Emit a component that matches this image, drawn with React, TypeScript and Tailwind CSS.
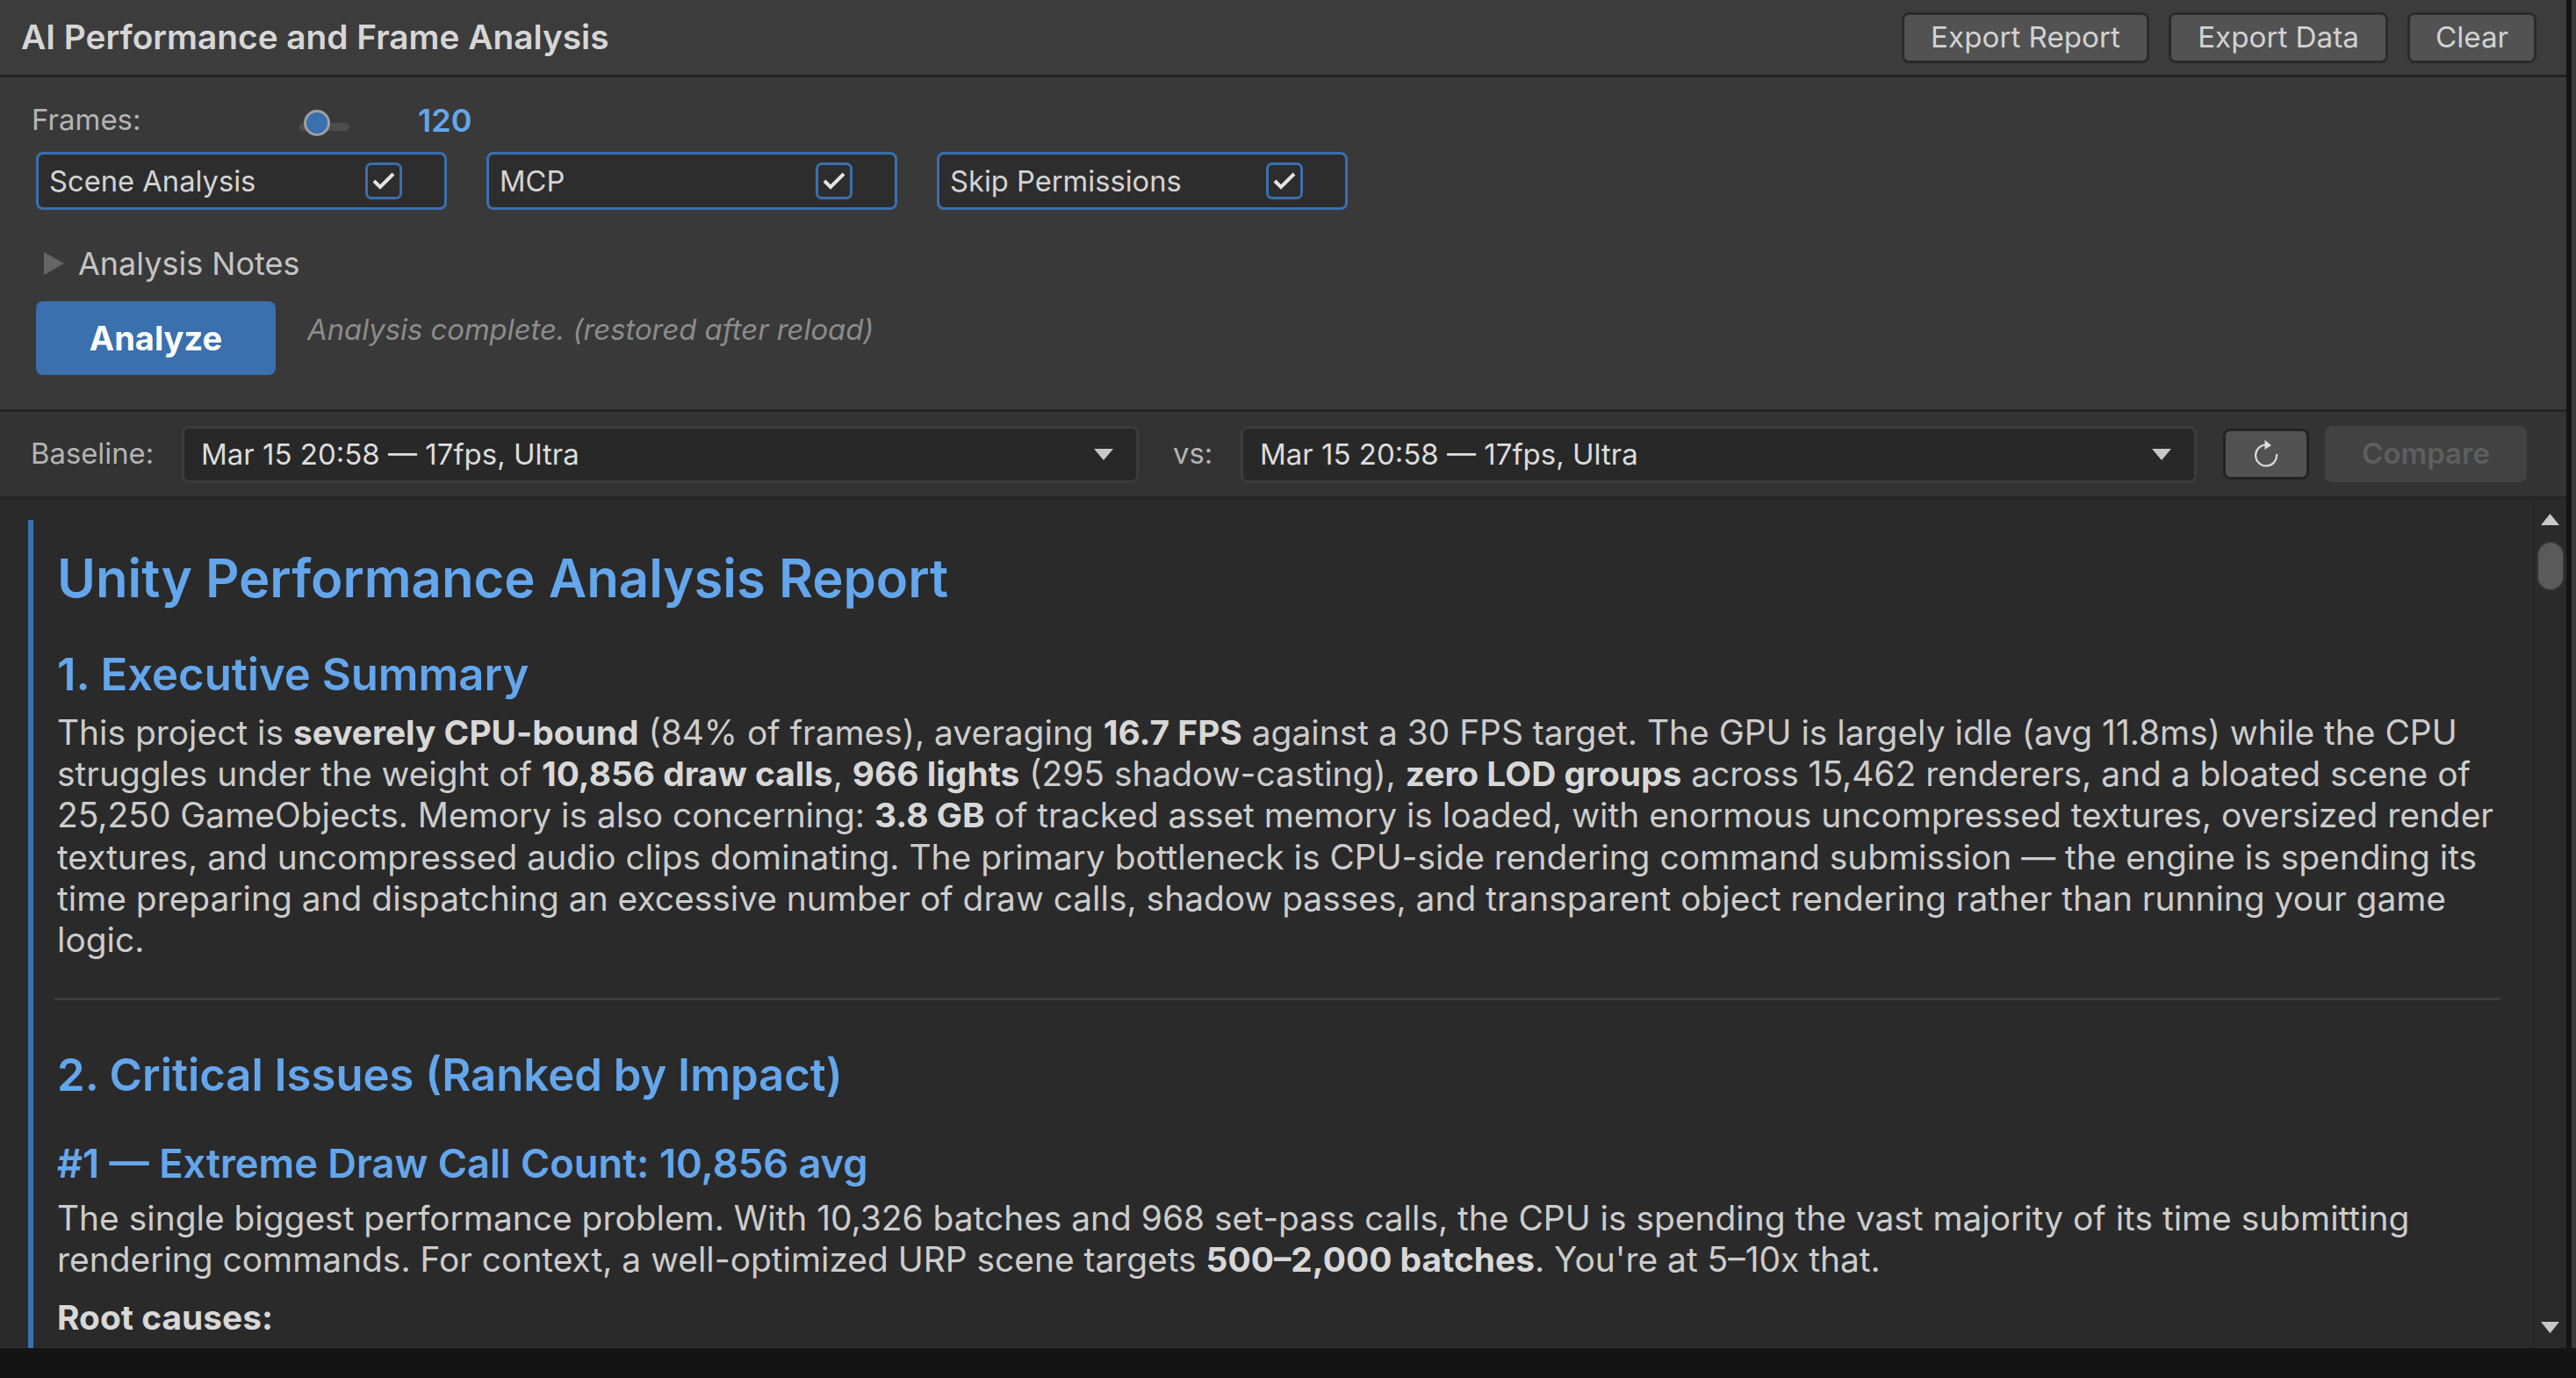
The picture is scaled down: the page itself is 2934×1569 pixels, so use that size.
import React from "react";

const inter = { fontFamily: '"Inter", "Liberation Sans", sans-serif' };

function TopButton({ label, width }: { label: string; width: string }) {
  return (
    <button className={`${width} h-[58px] shrink-0 rounded-[8px] border-[3px] border-[#2a2a2a] bg-[#525252] text-[33.2px] leading-none text-[#d2d2d2]`}>
      {label}
    </button>
  );
}

function Toggle({ label }: { label: string }) {
  return (
    <label className="flex h-[66px] w-[468px] shrink-0 items-center justify-between rounded-[8px] border-[3px] border-[#3a70ae] bg-[#2d2d2d] pl-[12px] pr-[48px] text-[32.7px] text-[#d4d4d4]">
      <span className="translate-y-[1px]">{label}</span>
      <span className="flex h-[42px] w-[42px] items-center justify-center rounded-[7px] border-[3px] border-[#3a70ae] bg-[#2d2d2d]">
        <svg width="26" height="20" viewBox="0 0 26 20" fill="none">
          <path d="M2 10 L9 17 L24 2" stroke="#e4e4e4" strokeWidth="4" />
        </svg>
      </span>
    </label>
  );
}

function Select({ width, label }: { width: string; label: string }) {
  return (
    <div className={`${width} flex h-[65px] shrink-0 items-center justify-between rounded-[8px] border-[3px] border-[#3c3c3c] bg-[#282828] pl-[19px] pr-[26px] text-[33px] text-[#dcdcdc]`}>
      <span className="translate-y-[1px]">{label}</span>
      <svg width="22" height="13" viewBox="0 0 22 13">
        <path d="M0 0 H22 L11 13 Z" fill="#c8c8c8" />
      </svg>
    </div>
  );
}

function B({ children }: { children: React.ReactNode }) {
  return <strong className="font-bold text-[#d8d8d8]">{children}</strong>;
}

export default function App() {
  return (
    <div style={inter} className="flex h-[1569px] w-[2934px] flex-col overflow-hidden bg-[#141414]">
      <div className="flex h-[1535px] shrink-0">
        <main className="flex w-[2923px] shrink-0 flex-col">
          {/* title bar */}
          <header className="flex h-[88px] shrink-0 items-center border-b-[3px] border-[#232323] bg-[#3c3c3c] pl-[24px] pr-[34px]">
            <h1 className="flex-1 text-[38.8px] font-semibold text-[#d6d6d6]">AI Performance and Frame Analysis</h1>
            <div className="flex gap-[22px]">
              <TopButton label="Export Report" width="w-[282px]" />
              <TopButton label="Export Data" width="w-[250px]" />
              <TopButton label="Clear" width="w-[147px]" />
            </div>
          </header>

          {/* controls */}
          <section className="flex h-[381px] shrink-0 flex-col border-b-[3px] border-[#232323] bg-[#393939] pl-[41px] pt-[29px]">
            <div className="-ml-[5px] flex h-[40px] items-center">
              <span className="w-[305px] text-[33px] text-[#b4b4b4]">Frames:</span>
              <div className="relative h-[9px] w-[57px] translate-y-[7px] rounded-full bg-[#4d4d4d]">
                <span className="absolute left-[5px] top-[-15px] h-[30px] w-[30px] rounded-full border-[3px] border-[#a0a0a0] bg-[#3a70ae]" />
              </div>
              <span className="ml-[78px] text-[36px] font-semibold text-[#64a6ec]">120</span>
            </div>
            <div className="mt-[16px] flex gap-[45px]">
              <Toggle label="Scene Analysis" />
              <Toggle label="MCP" />
              <Toggle label="Skip Permissions" />
            </div>
            <div className="ml-[9px] mt-[42px] flex h-[38px] items-center gap-[16px]">
              <svg width="23" height="26" viewBox="0 0 23 26">
                <path d="M0 0 L23 13 L0 26 Z" fill="#666666" />
              </svg>
              <span className="text-[36px] text-[#c4c4c4]">Analysis Notes</span>
            </div>
            <div className="mt-[24px] flex items-start">
              <button className="h-[84px] w-[273px] rounded-[8px] bg-[#3a70ae] text-[38px] font-bold text-white">Analyze</button>
              <span className="ml-[36px] mt-[8px] text-[32.8px] italic text-[#8c8c8c]">Analysis complete. (restored after reload)</span>
            </div>
          </section>

          {/* compare bar */}
          <section className="flex h-[99px] shrink-0 items-center border-b-[3px] border-[#242424] bg-[#333333] pl-[35px]">
            <span className="w-[172px] text-[32.8px] text-[#b4b4b4]">Baseline:</span>
            <Select width="w-[1090px]" label="Mar 15 20:58 — 17fps, Ultra" />
            <span className="ml-[39px] w-[77px] text-[32.8px] text-[#b4b4b4]">vs:</span>
            <Select width="w-[1089px]" label="Mar 15 20:58 — 17fps, Ultra" />
            <button className="ml-[30px] flex h-[58px] w-[98px] items-center justify-center rounded-[8px] border-[3px] border-[#232323] bg-[#525252]">
              <svg width="30" height="34" viewBox="0 0 30 34" fill="none">
                <path d="M27 17 A12 12 0 1 1 15 6.5" stroke="#dcdcdc" strokeWidth="2.2" />
                <path d="M13.5 1 L21 7 L13.5 12 Z" fill="#dcdcdc" />
              </svg>
            </button>
            <button className="ml-[18px] h-[64px] w-[230px] rounded-[8px] bg-[#424242] text-[33px] font-semibold text-[#5f5f5f]">Compare</button>
          </section>

          {/* report */}
          <section className="flex min-h-0 flex-1 bg-[#2a2a2a]">
            <div className="min-w-0 flex-1 overflow-hidden pl-[32px] pr-[34px] pt-[24px]">
              <article className="h-[943px] border-l-[6px] border-[#3a70ae] pl-[27px] pt-[30px] text-[38.9px] leading-[47.2px] text-[#cccccc]">
                <h2 className="text-[59.8px] font-semibold leading-[72px] text-[#64a6ec]">Unity Performance Analysis Report</h2>
                <h3 className="mt-[44px] text-[50.8px] font-semibold leading-[60px] text-[#64a6ec]">1. Executive Summary</h3>
                <p className="mt-[12px]">
                  This project is <B>severely CPU-bound</B> (84% of frames), averaging <B>16.7 FPS</B> against a 30 FPS target. The GPU is largely idle (avg 11.8ms) while the CPU struggles under the weight of <B>10,856 draw calls</B>, <B>966 lights</B> (295 shadow-casting), <B>zero LOD groups</B> across 15,462 renderers, and a bloated scene of 25,250 GameObjects. Memory is also concerning: <B>3.8 GB</B> of tracked asset memory is loaded, with enormous uncompressed textures, oversized render textures, and uncompressed audio clips dominating. The primary bottleneck is CPU-side rendering command submission — the engine is spending its time preparing and dispatching an excessive number of draw calls, shadow passes, and transparent object rendering rather than running your game logic.
                </p>
                <hr className="-ml-[3px] mr-[2px] mt-[43px] border-t-[3px] border-[#3c3c3c]" />
                <h3 className="mt-[55px] text-[50.8px] font-semibold leading-[60px] text-[#64a6ec]">2. Critical Issues (Ranked by Impact)</h3>
                <h4 className="mt-[45px] text-[45.2px] font-semibold leading-[52px] text-[#64a6ec]">#1 — Extreme Draw Call Count: 10,856 avg</h4>
                <p className="mt-[12px]">
                  The single biggest performance problem. With 10,326 batches and 968 set-pass calls, the CPU is spending the vast majority of its time submitting rendering commands. For context, a well-optimized URP scene targets <B>500–2,000 batches</B>. You're at 5–10x that.
                </p>
                <p className="mt-[18px]"><B>Root causes:</B></p>
              </article>
            </div>
            <aside className="relative flex w-[39px] shrink-0 flex-col items-center border-l-[2px] border-[#272727] pt-[17px]">
              <svg width="21" height="13" viewBox="0 0 21 13">
                <path d="M10.5 0 L21 13 H0 Z" fill="#c8c8c8" />
              </svg>
              <div className="mt-[18px] h-[57px] w-[32px] rounded-full border-[2px] border-[#333333] bg-[#5a5a5a]" />
              <svg className="mt-auto mb-[17px]" width="21" height="13" viewBox="0 0 21 13">
                <path d="M0 0 H21 L10.5 13 Z" fill="#c8c8c8" />
              </svg>
            </aside>
          </section>
        </main>
        <div className="w-[6px] shrink-0" />
        <div className="w-[5px] shrink-0 bg-[#3c3c3c]" />
      </div>
    </div>
  );
}
